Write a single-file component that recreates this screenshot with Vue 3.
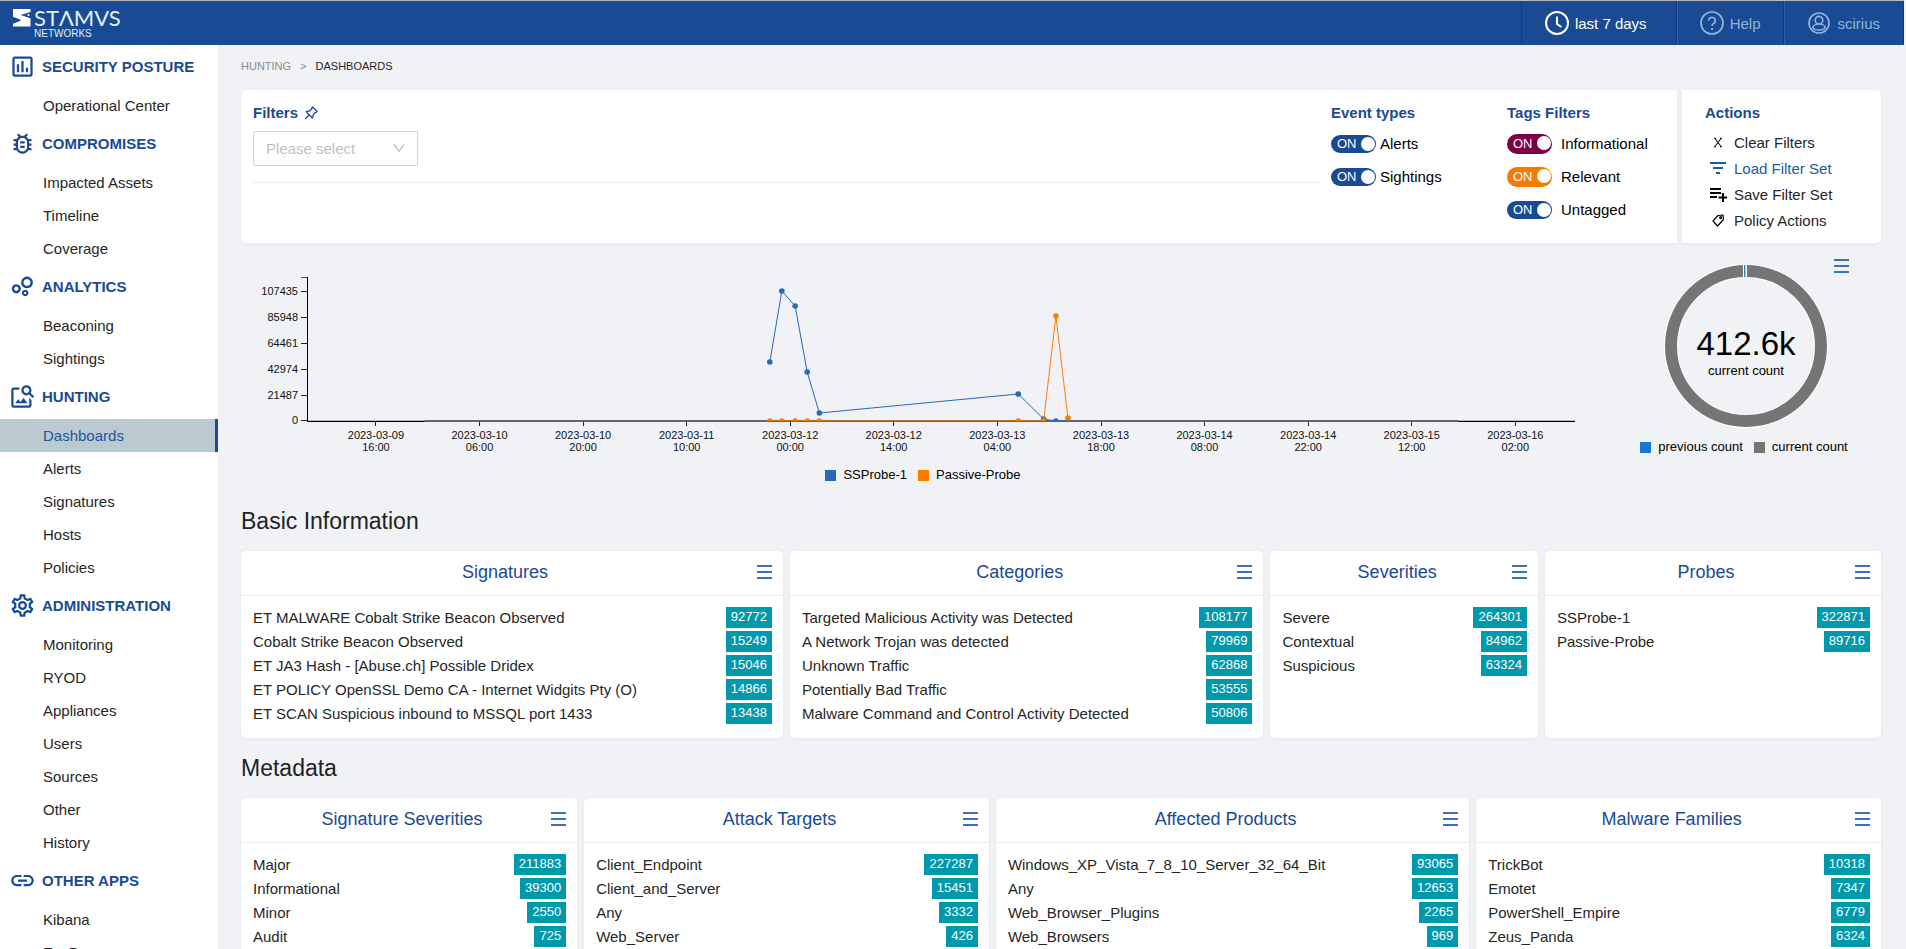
<script setup>
const icons = {
  posture: 'M19 3H5c-1.1 0-2 .9-2 2v14c0 1.1.9 2 2 2h14c1.1 0 2-.9 2-2V5c0-1.1-.9-2-2-2zm0 16H5V5h14v14zM7 10h2v7H7zm4-3h2v10h-2zm4 6h2v4h-2z',
  bug: 'M20 8h-2.81c-.45-.78-1.07-1.45-1.82-1.96L17 4.41 15.59 3l-2.17 2.17C12.96 5.06 12.49 5 12 5s-.96.06-1.41.17L8.41 3 7 4.41l1.62 1.63C7.88 6.55 7.26 7.22 6.81 8H4v2h2.09c-.05.33-.09.66-.09 1v1H4v2h2v1c0 .34.04.67.09 1H4v2h2.81c1.04 1.79 2.97 3 5.19 3s4.15-1.21 5.19-3H20v-2h-2.09c.05-.33.09-.66.09-1v-1h2v-2h-2v-1c0-.34-.04-.67-.09-1H20V8zm-4 4v3c0 .22-.03.47-.07.7l-.1.65-.37.65c-.72 1.24-2.04 2-3.46 2s-2.74-.77-3.46-2l-.37-.64-.1-.65C8.03 15.48 8 15.23 8 15v-4c0-.23.03-.48.07-.7l.1-.65.37-.65c.3-.52.72-.97 1.21-1.31l.57-.39.74-.18c.31-.08.63-.12.94-.12.32 0 .63.04.95.12l.68.16.61.42c.5.34.91.78 1.21 1.31l.38.65.1.65c.04.22.07.47.07.69v1zm-6 2h4v2h-4zm0-4h4v2h-4z',
  bubbles: 'M6.5 10a4 4 0 1 0 .01 0zm0 2.1a1.9 1.9 0 1 1-.01 0zM16 3.2a5.2 5.2 0 1 0 .01 0zm0 2.1a3.1 3.1 0 1 1-.01 0zM14.4 14.8a2.9 2.9 0 1 0 .01 0zm0 1.9a1 1 0 1 1-.01 0z',
  hunting: 'M18 13v7H4V6h5.02c.05-.71.22-1.38.48-2H4c-1.1 0-2 .9-2 2v14c0 1.1.9 2 2 2h14c1.1 0 2-.9 2-2v-5l-2-2zm-1.5 5h-11l2.75-3.53 1.96 2.36 2.75-3.54zm2.8-9.11c.44-.7.7-1.51.7-2.39C20 4.01 17.99 2 15.5 2S11 4.01 11 6.5s2.01 4.5 4.49 4.5c.88 0 1.7-.26 2.39-.7L21 13.42 22.42 12 19.3 8.89zM15.5 9C14.12 9 13 7.88 13 6.5S14.12 4 15.5 4 18 5.12 18 6.5 16.88 9 15.5 9z',
  gear: 'M19.43 12.98c.04-.32.07-.64.07-.98 0-.34-.03-.66-.07-.98l2.11-1.65c.19-.15.24-.42.12-.64l-2-3.46c-.09-.16-.26-.25-.44-.25-.06 0-.12.01-.17.03l-2.49 1c-.52-.4-1.08-.73-1.69-.98l-.38-2.65C14.46 2.18 14.25 2 14 2h-4c-.25 0-.46.18-.49.42l-.38 2.65c-.61.25-1.17.59-1.69.98l-2.49-1c-.06-.02-.12-.03-.18-.03-.17 0-.34.09-.43.25l-2 3.46c-.13.22-.07.49.12.64l2.11 1.65c-.04.32-.07.65-.07.98 0 .33.03.66.07.98l-2.11 1.65c-.19.15-.24.42-.12.64l2 3.46c.09.16.26.25.44.25.06 0 .12-.01.17-.03l2.49-1c.52.4 1.08.73 1.69.98l.38 2.65c.03.24.24.42.49.42h4c.25 0 .46-.18.49-.42l.38-2.65c.61-.25 1.17-.59 1.69-.98l2.49 1c.06.02.12.03.18.03.17 0 .34-.09.43-.25l2-3.46c.12-.22.07-.49-.12-.64l-2.11-1.65zm-1.98-1.71c.04.31.05.52.05.73 0 .21-.02.43-.05.73l-.14 1.13.89.7 1.08.84-.7 1.21-1.27-.51-1.04-.42-.9.68c-.43.32-.84.56-1.25.73l-1.06.43-.16 1.13-.2 1.35h-1.4l-.19-1.35-.16-1.13-1.06-.43c-.43-.18-.83-.41-1.23-.71l-.91-.7-1.06.43-1.27.51-.7-1.21 1.08-.84.89-.7-.14-1.13c-.03-.31-.05-.54-.05-.74s.02-.43.05-.73l.14-1.13-.89-.7-1.08-.84.7-1.21 1.27.51 1.04.42.9-.68c.43-.32.84-.56 1.25-.73l1.06-.43.16-1.13.2-1.35h1.39l.19 1.35.16 1.13 1.06.43c.43.18.83.41 1.23.71l.91.7 1.06-.43 1.27-.51.7 1.21-1.07.85-.89.7.14 1.13zM12 8c-2.21 0-4 1.79-4 4s1.79 4 4 4 4-1.79 4-4-1.79-4-4-4zm0 6c-1.1 0-2-.9-2-2s.9-2 2-2 2 .9 2 2-.9 2-2 2z',
  link: 'M3.9 12c0-1.71 1.39-3.1 3.1-3.1h4V7H7c-2.76 0-5 2.24-5 5s2.24 5 5 5h4v-1.9H7c-1.71 0-3.1-1.39-3.1-3.1zM8 13h8v-2H8v2zm9-6h-4v1.9h4c1.71 0 3.1 1.39 3.1 3.1s-1.39 3.1-3.1 3.1h-4V17h4c2.76 0 5-2.24 5-5s-2.24-5-5-5z',
}

const menu = [
  { title: 'SECURITY POSTURE', icon: 'posture', items: ['Operational Center'] },
  { title: 'COMPROMISES', icon: 'bug', items: ['Impacted Assets', 'Timeline', 'Coverage'] },
  { title: 'ANALYTICS', icon: 'bubbles', items: ['Beaconing', 'Sightings'] },
  { title: 'HUNTING', icon: 'hunting', items: ['Dashboards', 'Alerts', 'Signatures', 'Hosts', 'Policies'] },
  { title: 'ADMINISTRATION', icon: 'gear', items: ['Monitoring', 'RYOD', 'Appliances', 'Users', 'Sources', 'Other', 'History'] },
  { title: 'OTHER APPS', icon: 'link', items: ['Kibana', 'EveBox'] },
]
const active = 'Dashboards'

const eventTypes = ['Alerts', 'Sightings']
const tags = [
  { name: 'Informational', tone: 'maroon' },
  { name: 'Relevant', tone: 'orange' },
  { name: 'Untagged', tone: 'navy' },
]

const yTicks = [
  { v: 107435, y: 33 },
  { v: 85948, y: 59 },
  { v: 64461, y: 85 },
  { v: 42974, y: 111 },
  { v: 21487, y: 137 },
  { v: 0, y: 162 },
]
const xTicks = [
  ['2023-03-09', '16:00'], ['2023-03-10', '06:00'], ['2023-03-10', '20:00'], ['2023-03-11', '10:00'],
  ['2023-03-12', '00:00'], ['2023-03-12', '14:00'], ['2023-03-13', '04:00'], ['2023-03-13', '18:00'],
  ['2023-03-14', '08:00'], ['2023-03-14', '22:00'], ['2023-03-15', '12:00'], ['2023-03-16', '02:00'],
].map(([day, hour], i) => ({ day, hour, x: `${(5.36 + i * 8.175).toFixed(2)}%` }))

const times = [36.45, 37.4, 38.45, 39.4, 40.36, 56.06, 58.06, 59.03, 59.98]
const makeSeries = (name, color, values) => {
  const points = values.map((y, i) => ({ x: `${times[i]}%`, y }))
  return { name, color, points, segments: points.slice(1).map((to, i) => ({ from: points[i], to })) }
}
const series = [
  makeSeries('SSProbe-1', '#276ab8', [104, 33, 48, 114, 155, 136, 161, 163, 163]),
  makeSeries('Passive-Probe', '#ff7b00', [163, 163, 163, 163, 163, 163, 163, 58, 160]),
]

const groups = [
  {
    title: 'Basic Information',
    cards: [
      { title: 'Signatures', span: 8, rows: [['ET MALWARE Cobalt Strike Beacon Observed', 92772], ['Cobalt Strike Beacon Observed', 15249], ['ET JA3 Hash - [Abuse.ch] Possible Dridex', 15046], ['ET POLICY OpenSSL Demo CA - Internet Widgits Pty (O)', 14866], ['ET SCAN Suspicious inbound to MSSQL port 1433', 13438]] },
      { title: 'Categories', span: 7, rows: [['Targeted Malicious Activity was Detected', 108177], ['A Network Trojan was detected', 79969], ['Unknown Traffic', 62868], ['Potentially Bad Traffic', 53555], ['Malware Command and Control Activity Detected', 50806]] },
      { title: 'Severities', span: 4, rows: [['Severe', 264301], ['Contextual', 84962], ['Suspicious', 63324]] },
      { title: 'Probes', span: 5, rows: [['SSProbe-1', 322871], ['Passive-Probe', 89716]] },
    ],
  },
  {
    title: 'Metadata',
    cards: [
      { title: 'Signature Severities', span: 5, rows: [['Major', 211883], ['Informational', 39300], ['Minor', 2550], ['Audit', 725]] },
      { title: 'Attack Targets', span: 6, rows: [['Client_Endpoint', 227287], ['Client_and_Server', 15451], ['Any', 3332], ['Web_Server', 426]] },
      { title: 'Affected Products', span: 7, rows: [['Windows_XP_Vista_7_8_10_Server_32_64_Bit', 93065], ['Any', 12653], ['Web_Browser_Plugins', 2265], ['Web_Browsers', 969]] },
      { title: 'Malware Families', span: 6, rows: [['TrickBot', 10318], ['Emotet', 7347], ['PowerShell_Empire', 6779], ['Zeus_Panda', 6324]] },
    ],
  },
]
</script>

<template>
  <div class="app">
    <header class="topbar">
      <a class="logo" href="#" aria-label="Stamus Networks">
        <svg class="mark" viewBox="0 0 18 18" aria-hidden="true">
          <path fill="#fff" d="M0 0h17.500v3.200L10 6.300l7.500 3V17.500H0v-3.300l8-3.200-8-3.200z" />
          <path fill="none" stroke="#1a4a94" stroke-width="1.100" d="M17.500 3.400 9.500 6l8 2.400M0 9l6.500 2.500L0 14.300" />
          <circle cx="15.500" cy="6" r="1.100" fill="#fff" />
        </svg>
        <span class="words">
          <span class="word-top">STΛMVS</span>
          <span class="word-sub">NETWORKS</span>
        </span>
      </a>
      <nav class="tools">
        <button type="button" class="tool bright">
          <svg viewBox="0 0 24 24" class="tool-icon" fill="none" stroke="currentColor" stroke-width="2">
            <circle cx="12" cy="12" r="11" /><path d="M12 5.500V13l4.500 3" />
          </svg>
          last 7 days
        </button>
        <button type="button" class="tool">
          <svg viewBox="0 0 24 24" class="tool-icon" fill="none" stroke="currentColor" stroke-width="1.700">
            <circle cx="12" cy="12" r="11" /><path d="M8.700 9.600a3.300 3.300 0 1 1 5 2.800c-1.200.8-1.700 1.400-1.700 2.700" />
            <path d="M12 17v2" />
          </svg>
          Help
        </button>
        <button type="button" class="tool">
          <svg viewBox="0 0 24 24" class="tool-icon" fill="none" stroke="currentColor" stroke-width="1.600">
            <circle cx="12" cy="12" r="10" /><circle cx="12" cy="9.200" r="3.800" />
            <path d="M5.800 17c0-2.400 2.800-4 6.200-4s6.200 1.600 6.200 4c-1.600 1.500-3.800 2.200-6.200 2.200S7.400 18.500 5.800 17z" />
          </svg>
          scirius
        </button>
      </nav>
    </header>

    <div class="body">
      <aside class="sidebar">
        <nav v-for="group in menu" :key="group.title">
          <h2 class="group-title">
            <svg viewBox="0 0 24 24" aria-hidden="true"><path fill="currentColor" fill-rule="evenodd" :d="icons[group.icon]" /></svg>
            {{ group.title }}
          </h2>
          <a v-for="item in group.items" :key="item" href="#" class="item" :class="{ active: item === active }">{{ item }}</a>
        </nav>
      </aside>

      <main class="main">
        <div class="crumbs"><a href="#">HUNTING</a><span>&gt;</span><b>DASHBOARDS</b></div>

        <section class="filters">
          <div class="panel left">
            <div class="filter-col">
              <h3>
                <label for="filter-select">Filters</label>
                <svg class="pin" viewBox="0 0 13 13" fill="none" stroke="currentColor" stroke-width="1.200" stroke-linejoin="round">
                  <path d="M8 .9 12.200 5l-1 1-.5-.1-2.300 2.400c.3 1.200 0 2.100-.7 2.900L2 5.400c.9-.7 1.800-.9 3-.6l2.400-2.400L7.100 1.800z" />
                  <path d="M4.800 8.300.9 12.200" />
                </svg>
              </h3>
              <div class="select-wrap">
                <select id="filter-select"><option>Please select</option></select>
                <svg viewBox="0 0 12 10" fill="none" stroke="#bfbfbf" stroke-width="1.300"><path d="M1 1.500l5 7 5-7" /></svg>
              </div>
              <hr>
            </div>
            <div class="toggle-col events">
              <h3>Event types</h3>
              <label v-for="name in eventTypes" :key="name" class="toggle">
                <span class="track navy"><input type="checkbox" checked>ON<i></i></span>{{ name }}
              </label>
            </div>
            <div class="toggle-col tags">
              <h3>Tags Filters</h3>
              <label v-for="tag in tags" :key="tag.name" class="toggle">
                <span class="track" :class="tag.tone"><input type="checkbox" checked>ON<i></i></span>{{ tag.name }}
              </label>
            </div>
          </div>
          <div class="panel actions">
            <h3>Actions</h3>
            <button type="button">
              <svg viewBox="0 0 18 18" fill="none" stroke="currentColor" stroke-width="1.200"><path d="M6 5.500l6 8M12 5.500l-6 8M5 5.300h2M11 5.300h2M5 13.700h2M11 13.700h2" /></svg>
              Clear Filters
            </button>
            <button type="button" class="blue">
              <svg viewBox="0 0 18 18" fill="none" stroke="currentColor" stroke-width="2"><path d="M1 4h16M4 9h10M7 14h4" /></svg>
              Load Filter Set
            </button>
            <button type="button">
              <svg viewBox="0 0 18 18" fill="none" stroke="#000" stroke-width="2"><path d="M1 4h11M1 8h11M1 12h7M14 8v9M9.500 12.500H18" /></svg>
              Save Filter Set
            </button>
            <button type="button">
              <svg viewBox="0 0 18 18" fill="none" stroke="#000" stroke-width="1.200"><path d="M4 10l5-5.500 5-.5.500 4.500-6 6.500z" stroke-linejoin="round" /><circle cx="11.700" cy="6.600" r="1" /></svg>
              Policy Actions
            </button>
          </div>
        </section>

        <section class="charts">
          <div class="timeline">
            <div class="plot-row">
              <svg class="y-axis" aria-hidden="true">
                <rect x="60" y="19" width="7" height="1" fill="#555" />
                <g v-for="t in yTicks" :key="t.v">
                  <rect x="60" :y="t.y" width="7" height="1" fill="#222" />
                  <text x="57" :y="t.y + 4" text-anchor="end">{{ t.v }}</text>
                </g>
              </svg>
              <svg class="plot" role="img" aria-label="Events over time">
                <rect x="-1" y="19" width="1" height="145" fill="#000" />
                <rect x="0" y="162" width="100%" height="2" fill="#666" />
                <rect x="0" y="162" width="9.200%" height="1" fill="#b5b6b8" />
                <rect x="0" y="163" width="9.200%" height="1" fill="#000" />
                <rect x="90.800%" y="162" width="9.200%" height="1" fill="#b5b6b8" />
                <rect x="90.800%" y="163" width="9.200%" height="1" fill="#000" />
                <g v-for="t in xTicks" :key="t.x">
                  <line :x1="t.x" :x2="t.x" y1="164" y2="168" stroke="#222" shape-rendering="crispEdges" />
                  <text :x="t.x" y="181" text-anchor="middle">{{ t.day }}</text>
                  <text :x="t.x" y="193" text-anchor="middle">{{ t.hour }}</text>
                </g>
                <svg width="100%" height="163">
                  <g v-for="s in series" :key="s.name">
                    <line
                      v-for="(seg, i) in s.segments" :key="'l' + i" :stroke="s.color"
                      :x1="seg.from.x" :y1="seg.from.y" :x2="seg.to.x" :y2="seg.to.y"
                    />
                    <circle v-for="(p, i) in s.points" :key="'p' + i" :cx="p.x" :cy="p.y" r="2.800" :fill="s.color" />
                  </g>
                </svg>
              </svg>
            </div>
            <div class="legend">
              <span><i class="sw blue-line"></i>SSProbe-1</span>
              <span><i class="sw orange-line"></i>Passive-Probe</span>
            </div>
          </div>
          <div class="donut">
            <button type="button" class="menu-btn float" aria-label="Chart menu"><i></i><i></i><i></i></button>
            <svg viewBox="0 0 164 164" class="ring" role="img" aria-label="412.6k current count">
              <circle cx="82" cy="82" r="75" fill="none" stroke="#fff" stroke-width="14" />
              <circle cx="82" cy="82" r="75" fill="none" stroke="#757575" stroke-width="12" />
              <rect x="79" y="0" width="4" height="14" fill="#fff" />
              <rect x="80" y="1" width="1" height="12" fill="#1f7dd2" />
              <rect x="81" y="1" width="1" height="12" fill="#a3cdf0" />
              <text x="82" y="91" class="big" text-anchor="middle">412.6k</text>
              <text x="82" y="111" class="small" text-anchor="middle">current count</text>
            </svg>
            <div class="legend">
              <span><i class="sw prev"></i>previous count</span>
              <span><i class="sw cur"></i>current count</span>
            </div>
          </div>
        </section>

        <section v-for="g in groups" :key="g.title">
          <h2 class="section-title">{{ g.title }}</h2>
          <div class="cards">
            <article v-for="c in g.cards" :key="c.title" class="card" :class="'span-' + c.span">
              <header>
                <h3>{{ c.title }}</h3>
                <button type="button" class="menu-btn" :aria-label="c.title + ' menu'"><i></i><i></i><i></i></button>
              </header>
              <ul>
                <li v-for="r in c.rows" :key="r[0]"><span>{{ r[0] }}</span><b>{{ r[1] }}</b></li>
              </ul>
            </article>
          </div>
        </section>
      </main>
    </div>
  </div>
</template>

<style>
body {
  margin: 0;
  background: #f0f2f5;
}
</style>

<style scoped>
* {
  box-sizing: border-box;
}
.app {
  height: 100vh;
  display: flex;
  flex-direction: column;
  font-family: "Liberation Sans", Arial, sans-serif;
  font-size: 15px;
  color: #262626;
}
h2, h3, ul, hr {
  margin: 0;
  padding: 0;
}
a {
  color: inherit;
  text-decoration: none;
}
button {
  font: inherit;
  color: inherit;
  background: none;
  border: 0;
  padding: 0;
  cursor: pointer;
}

/* Top bar */
.topbar {
  flex: none;
  display: flex;
  justify-content: space-between;
  height: 45px;
  margin-right: 2px;
  background: #1a4a94;
  border-top: 1px solid #b4b8bd;
}
.logo {
  display: flex;
  gap: 3px;
  padding: 7px 0 0 13px;
  color: #dff1f7;
}
.mark {
  width: 18px;
  height: 18px;
  margin-top: 1px;
}
.words {
  display: flex;
  flex-direction: column;
}
.word-top {
  font-family: Lato, "Open Sans", sans-serif;
  font-size: 22px;
  line-height: 20px;
}
.word-sub {
  font-family: "Liberation Sans Narrow", "Liberation Sans", sans-serif;
  font-size: 10px;
  line-height: 12px;
}
.tools {
  display: flex;
}
.tool {
  display: flex;
  align-items: center;
  gap: 6px;
  padding: 0 23px;
  color: #8fb6d8;
  border-right: 1px solid #123a78;
}
.tool:first-child {
  border-left: 1px solid #123a78;
  padding-right: 29px;
}
.tool + .tool {
  box-shadow: inset 1px 0 #2b62a8;
}
.tool.bright {
  color: #fff;
}
.tool-icon {
  width: 24px;
  height: 24px;
}

/* Side navigation */
.body {
  flex: 1;
  min-height: 0;
  display: flex;
}
.sidebar {
  flex: none;
  width: 218px;
  background: #fff;
  overflow: hidden auto;
  scrollbar-width: none;
}
.group-title {
  display: flex;
  align-items: center;
  gap: 6px;
  height: 44px;
  padding: 0 0 2px 9px;
  font-size: 15px;
  font-weight: bold;
  color: #1a4a94;
}
.group-title svg {
  width: 27px;
  height: 27px;
}
.item {
  display: block;
  padding-left: 43px;
  line-height: 33px;
}
.item.active {
  background: #bacad0;
  color: #1f56a0;
  border-right: 3px solid #1a4a94;
}

/* Main column */
.main {
  flex: 1;
  min-width: 0;
  padding: 11px 25px 0 23px;
  overflow: hidden auto;
  scrollbar-width: none;
}
.crumbs {
  display: flex;
  gap: 9px;
  margin-bottom: 14px;
  font-size: 11px;
  line-height: 20px;
  color: #8c8c8c;
}
.crumbs b {
  font-weight: normal;
  color: #262626;
}

.filters {
  display: flex;
  gap: 5px;
}
.panel {
  background: #fff;
  padding-top: 11px;
  height: 153px;
  box-shadow: 0 1px 4px rgba(0, 0, 0, 0.06);
}
.panel h3 {
  font-size: 15px;
  line-height: 24px;
  color: #1a4a94;
}
.panel.left {
  flex: 1;
  display: flex;
  gap: 11px;
  padding-left: 12px;
  border-radius: 5px 0 0 5px;
}
.filter-col {
  flex: 1;
}
.filter-col h3 {
  display: flex;
  align-items: center;
  gap: 6px;
}
.pin {
  width: 14px;
  height: 14px;
}
.select-wrap {
  position: relative;
  width: 165px;
  margin-top: 6px;
}
.select-wrap select {
  display: block;
  width: 100%;
  height: 35px;
  padding: 0 12px 1px;
  appearance: none;
  font: inherit;
  color: #bfbfbf;
  background: #fff;
  border: 1px solid #d5d5d5;
  border-radius: 2px;
}
.select-wrap svg {
  position: absolute;
  right: 13px;
  top: 12px;
  width: 12px;
  height: 10px;
  pointer-events: none;
}
hr {
  border: 0;
  margin-top: 16px;
  border-top: 1px solid #ececec;
}
.events {
  width: 165px;
}
.tags {
  width: 170px;
}
.toggle-col h3 {
  margin-bottom: 2px;
}
.toggle {
  display: flex;
  align-items: center;
  gap: 4px;
  height: 33px;
  color: #000;
}
.tags .toggle {
  gap: 9px;
}
.track {
  position: relative;
  display: flex;
  align-items: center;
  width: 45px;
  height: 18px;
  padding-left: 6px;
  border-radius: 10px;
  font-size: 13px;
  color: #fff;
}
.track input {
  position: absolute;
  inset: 0;
  width: 100%;
  height: 100%;
  margin: 0;
  opacity: 0;
}
.track i {
  position: absolute;
  right: 1px;
  top: 2px;
  width: 14px;
  height: 14px;
  border-radius: 50%;
  background: #fff;
}
.navy {
  background: #1a4a94;
}
.maroon {
  height: 20px;
  background: #7b0046;
}
.orange {
  height: 20px;
  background: #f57a00;
}
.actions {
  width: 199px;
  padding-left: 23px;
  border-radius: 0 5px 5px 0;
}
.actions h3 {
  margin-bottom: 4px;
}
.actions button {
  display: flex;
  align-items: center;
  gap: 7px;
  height: 26px;
  padding-left: 4px;
}
.actions svg {
  width: 18px;
  height: 18px;
}
.actions .blue {
  color: #1a5aa6;
}

/* Charts */
.charts {
  display: flex;
  gap: 6px;
  height: 233px;
  margin-top: 15px;
}
.timeline {
  flex: 1;
  min-width: 0;
}
.plot-row {
  display: flex;
  height: 207px;
  padding-right: 30px;
}
.y-axis {
  flex: none;
  width: 67px;
  height: 100%;
}
.plot {
  flex: 1;
  min-width: 0;
  height: 100%;
  overflow: visible;
}
.timeline text {
  font-size: 11px;
  fill: #111;
}
.legend {
  display: flex;
  justify-content: center;
  gap: 11px;
  font-size: 13px;
  line-height: 20px;
  color: #000;
}
.legend span {
  display: flex;
  align-items: center;
  gap: 7px;
}
.sw {
  width: 11px;
  height: 11px;
}
.blue-line {
  background: #276ab8;
}
.orange-line {
  background: #ff7b00;
}
.prev {
  background: #1879d4;
}
.cur {
  background: #757575;
}
.donut {
  position: relative;
  width: 270px;
  padding-top: 6px;
}
.donut .legend {
  padding-right: 4px;
}
.ring {
  display: block;
  width: 164px;
  height: 164px;
  margin: 0 auto 9px;
}
.big {
  font-size: 33px;
}
.small {
  font-size: 13px;
}
.menu-btn {
  display: flex;
  flex-direction: column;
  justify-content: space-between;
  width: 15px;
  height: 14px;
}
.menu-btn i {
  display: block;
  width: 100%;
  height: 2px;
  background: #3a72b4;
}
.menu-btn.float {
  position: absolute;
  top: 1px;
  right: 32px;
}

/* Cards */
.section-title {
  padding: 14px 0;
  font-size: 23px;
  line-height: 32px;
  font-weight: normal;
  color: #222;
}
.cards {
  display: grid;
  grid-template-columns: repeat(24, 1fr);
  gap: 7px;
}
.span-4 { grid-column: span 4; }
.span-5 { grid-column: span 5; }
.span-6 { grid-column: span 6; }
.span-7 { grid-column: span 7; }
.span-8 { grid-column: span 8; }
.card {
  min-width: 0;
  background: #fff;
  border-radius: 5px;
  box-shadow: 0 1px 4px rgba(0, 0, 0, 0.06);
}
.card header {
  display: flex;
  align-items: center;
  height: 45px;
  padding: 0 11px 2px 12px;
  border-bottom: 1px solid #ececec;
}
.card h3 {
  flex: 1;
  font-size: 18px;
  font-weight: normal;
  text-align: center;
  color: #1a4a94;
}
.card ul {
  padding: 9px 11px 13px 12px;
  list-style: none;
}
.card li {
  display: flex;
  align-items: center;
  justify-content: space-between;
  height: 24px;
}
.card li b {
  padding: 0 5px 1px;
  font-size: 13px;
  font-weight: normal;
  line-height: 20px;
  color: #fff;
  background: #0099ac;
}
</style>
